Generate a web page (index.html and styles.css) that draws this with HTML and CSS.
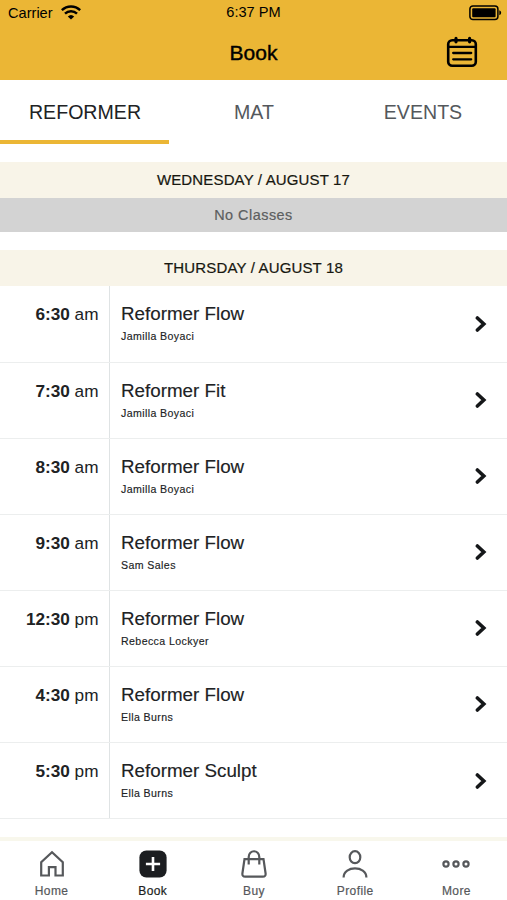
FILE: index.html
```html
<!DOCTYPE html>
<html lang="en">
<head>
    <meta charset="UTF-8">
    <meta name="viewport" content="width=device-width, initial-scale=1.0">
    <title>Book</title>
    <link rel="stylesheet" href="styles.css">
</head>
<body>
    <header class="header">
        <div class="status-bar">
            <div class="carrier">
                <span>Carrier</span>
                <svg class="wifi" width="20" height="15" viewBox="0 0 20 15" fill="none" stroke="#000" stroke-width="2.5">
                    <path d="M0.8 5.2C6 0.2 14 0.2 19.2 5.2M4 8.6C7.4 5.4 12.6 5.4 16 8.6"/>
                    <path d="M6.8 11.4Q10 8.4 13.2 11.4L10 14.6Z" fill="#000" stroke="none"/>
                </svg>
            </div>
            <span class="clock">6:37 PM</span>
            <svg class="battery" width="33" height="16" viewBox="0 0 33 16">
                <rect x="0.9" y="0.9" width="28" height="13.6" rx="3" fill="none" stroke="#000" stroke-width="1.5"/>
                <rect x="3.2" y="3.2" width="23.4" height="9" rx="1" fill="#000"/>
                <path d="M30.3 5.2Q32.2 5.8 32.2 7.7Q32.2 9.6 30.3 10.2Z" fill="#000"/>
            </svg>
        </div>
        <div class="title-bar">
            <h1>Book</h1>
            <svg class="calendar" width="32" height="32" viewBox="0 0 32 32" fill="none" stroke="#000" stroke-linecap="round">
                <rect x="2.2" y="4.2" width="27.6" height="25.6" rx="4" stroke-width="2.6"/>
                <path d="M2.2 10.8H29.8M7.2 17H25.2M7.2 23.3H25.2" stroke-width="2.3"/>
                <path d="M10 2.4V5.8M23.6 2.4V5.8" stroke-width="3.2"/>
            </svg>
        </div>
    </header>

    <nav class="tabs">
        <div class="tab active">REFORMER</div>
        <div class="tab">MAT</div>
        <div class="tab">EVENTS</div>
    </nav>

    <main class="schedule">
        <h2 class="day">WEDNESDAY / AUGUST 17</h2>
        <div class="no-classes">No Classes</div>
        <h2 class="day">THURSDAY / AUGUST 18</h2>
        <div class="classes">
            <div class="class-row">
                <div class="time"><b>6:30</b> am</div>
                <div class="info"><div class="name">Reformer Flow</div><div class="teacher">Jamilla Boyaci</div></div>
                <svg class="chevron" viewBox="0 0 12 16"><path d="M2.4 2L8.8 8L2.4 14"/></svg>
            </div>
            <div class="class-row">
                <div class="time"><b>7:30</b> am</div>
                <div class="info"><div class="name">Reformer Fit</div><div class="teacher">Jamilla Boyaci</div></div>
                <svg class="chevron" viewBox="0 0 12 16"><path d="M2.4 2L8.8 8L2.4 14"/></svg>
            </div>
            <div class="class-row">
                <div class="time"><b>8:30</b> am</div>
                <div class="info"><div class="name">Reformer Flow</div><div class="teacher">Jamilla Boyaci</div></div>
                <svg class="chevron" viewBox="0 0 12 16"><path d="M2.4 2L8.8 8L2.4 14"/></svg>
            </div>
            <div class="class-row">
                <div class="time"><b>9:30</b> am</div>
                <div class="info"><div class="name">Reformer Flow</div><div class="teacher">Sam Sales</div></div>
                <svg class="chevron" viewBox="0 0 12 16"><path d="M2.4 2L8.8 8L2.4 14"/></svg>
            </div>
            <div class="class-row">
                <div class="time"><b>12:30</b> pm</div>
                <div class="info"><div class="name">Reformer Flow</div><div class="teacher">Rebecca Lockyer</div></div>
                <svg class="chevron" viewBox="0 0 12 16"><path d="M2.4 2L8.8 8L2.4 14"/></svg>
            </div>
            <div class="class-row">
                <div class="time"><b>4:30</b> pm</div>
                <div class="info"><div class="name">Reformer Flow</div><div class="teacher">Ella Burns</div></div>
                <svg class="chevron" viewBox="0 0 12 16"><path d="M2.4 2L8.8 8L2.4 14"/></svg>
            </div>
            <div class="class-row">
                <div class="time"><b>5:30</b> pm</div>
                <div class="info"><div class="name">Reformer Sculpt</div><div class="teacher">Ella Burns</div></div>
                <svg class="chevron" viewBox="0 0 12 16"><path d="M2.4 2L8.8 8L2.4 14"/></svg>
            </div>
        </div>
    </main>

    <nav class="bottom-nav">
        <div class="nav-item">
            <svg viewBox="0 0 28 28"><path d="M3.2 25.5V12.2L14 2.3L24.8 12.2V25.5H17.5V17.2H10.9V25.5Z"/></svg>
            <span>Home</span>
        </div>
        <div class="nav-item active">
            <svg viewBox="0 0 28 28">
                <rect class="solid" x="0.4" y="0.4" width="27.2" height="27.2" rx="7"/>
                <path class="plus" d="M14 6.9V21.1M6.9 14H21.1"/>
            </svg>
            <span>Book</span>
        </div>
        <div class="nav-item">
            <svg viewBox="0 0 28 28">
                <path d="M4.5 9.2H23.5L25.6 23.5Q25.9 26.7 22.8 26.7H5.2Q2.1 26.7 2.4 23.5Z"/>
                <path d="M8.7 14.5V7C8.7 -0.7 19.3 -0.7 19.3 7V14.5"/>
            </svg>
            <span>Buy</span>
        </div>
        <div class="nav-item">
            <svg viewBox="0 0 28 28">
                <ellipse cx="14" cy="7.2" rx="5.3" ry="6"/>
                <path d="M2.6 27.4C2.8 15.4 25.2 15.4 25.4 27.4"/>
            </svg>
            <span>Profile</span>
        </div>
        <div class="nav-item">
            <svg viewBox="0 0 28 28">
                <circle cx="4" cy="14" r="2.6"/>
                <circle cx="14" cy="14" r="2.6"/>
                <circle cx="24" cy="14" r="2.6"/>
            </svg>
            <span>More</span>
        </div>
    </nav>
</body>
</html>
```

FILE: styles.css
```css
* {
    box-sizing: border-box;
}
body {
    margin: 0;
    height: 900px;
    display: flex;
    flex-direction: column;
    overflow: hidden;
    font-family: "Liberation Sans", Arial, sans-serif;
    color: #202224;
    background-color: #fff;
}
h1, h2 {
    margin: 0;
    font-weight: normal;
}

/* header */
.header {
    height: 80px;
    background-color: #ebb635;
    color: #000;
}
.status-bar {
    display: grid;
    grid-template-columns: 1fr auto 1fr;
    height: 25px;
    padding: 0 5px 0 8px;
    font-size: 14.6px;
    line-height: 24px;
}
.carrier {
    display: flex;
    gap: 8px;
    line-height: 26px;
}
.wifi {
    margin-top: 5px;
}
.clock {
    padding-right: 3px;
}
.battery {
    justify-self: end;
    margin-top: 5px;
}
.title-bar {
    display: grid;
    grid-template-columns: 1fr auto 1fr;
    align-items: center;
    height: 54px;
    padding-right: 29px;
    padding-left: 29px;
}
.title-bar h1 {
    grid-column: 2;
    font-size: 21px;
    line-height: 53px;
    -webkit-text-stroke: 0.4px #000;
}
.calendar {
    justify-self: end;
}

/* tabs */
.tabs {
    display: grid;
    grid-template-columns: repeat(3, 1fr);
    height: 64px;
}
.tab {
    height: 64px;
    padding: 2px 0 0 1px;
    border-bottom: 4px solid transparent;
    font-size: 19.6px;
    line-height: 60px;
    text-align: center;
    color: #54585c;
}
.tab.active {
    border-color: #ebb635;
    color: #202224;
}

/* schedule */
.schedule {
    flex: 1;
    padding-top: 18px;
}
.day {
    height: 36px;
    font-size: 15px;
    line-height: 36px;
    letter-spacing: 0.15px;
    text-align: center;
    color: #17170f;
    background-color: #f8f4e8;
    -webkit-text-stroke: 0.2px #17170f;
}
.no-classes {
    height: 34px;
    margin-bottom: 18px;
    font-size: 14.4px;
    line-height: 34px;
    letter-spacing: 0.5px;
    text-align: center;
    color: #5c5e60;
    background-color: #d3d3d3;
    -webkit-text-stroke: 0.2px #5c5e60;
}
.classes {
    padding-top: 0.4px;
}
.class-row {
    display: flex;
    height: 76.15px;
    border-bottom: 1px solid #eceeee;
}
.time {
    width: 110px;
    padding: 17px 10.5px 0 0;
    border-right: 1px solid #dfe3e4;
    font-size: 17.2px;
    line-height: 22px;
    text-align: right;
}
.info {
    flex: 1;
    padding: 17px 0 0 11px;
}
.name {
    font-size: 18.8px;
    line-height: 22px;
    -webkit-text-stroke: 0.15px #202224;
}
.teacher {
    padding-top: 4px;
    font-size: 10.6px;
    line-height: 14px;
    letter-spacing: 0.4px;
    -webkit-text-stroke: 0.15px #202224;
}
.chevron {
    width: 12px;
    height: 16px;
    margin: 29.3px 20.5px 0 0;
    fill: none;
    stroke: #151719;
    stroke-width: 3.6;
    stroke-linecap: round;
}

/* bottom navigation */
.bottom-nav {
    display: grid;
    grid-template-columns: repeat(5, 1fr);
    height: 63px;
    padding: 9px 0 0 1px;
    border-top: 4px solid #f8f7ec;
    background-color: #fff;
}
.nav-item {
    display: flex;
    flex-direction: column;
    align-items: center;
    font-size: 12px;
    line-height: 14px;
    letter-spacing: 0.4px;
    color: #56585b;
    -webkit-text-stroke: 0.2px currentColor;
}
.nav-item svg {
    width: 28px;
    height: 28px;
    margin-bottom: 6px;
    fill: none;
    stroke: #56585b;
    stroke-width: 2.2;
}
.nav-item.active {
    color: #1c1e21;
}
.nav-item .solid {
    fill: #1c1e21;
    stroke: none;
}
.nav-item .plus {
    stroke: #fff;
    stroke-width: 2.6;
}
```
